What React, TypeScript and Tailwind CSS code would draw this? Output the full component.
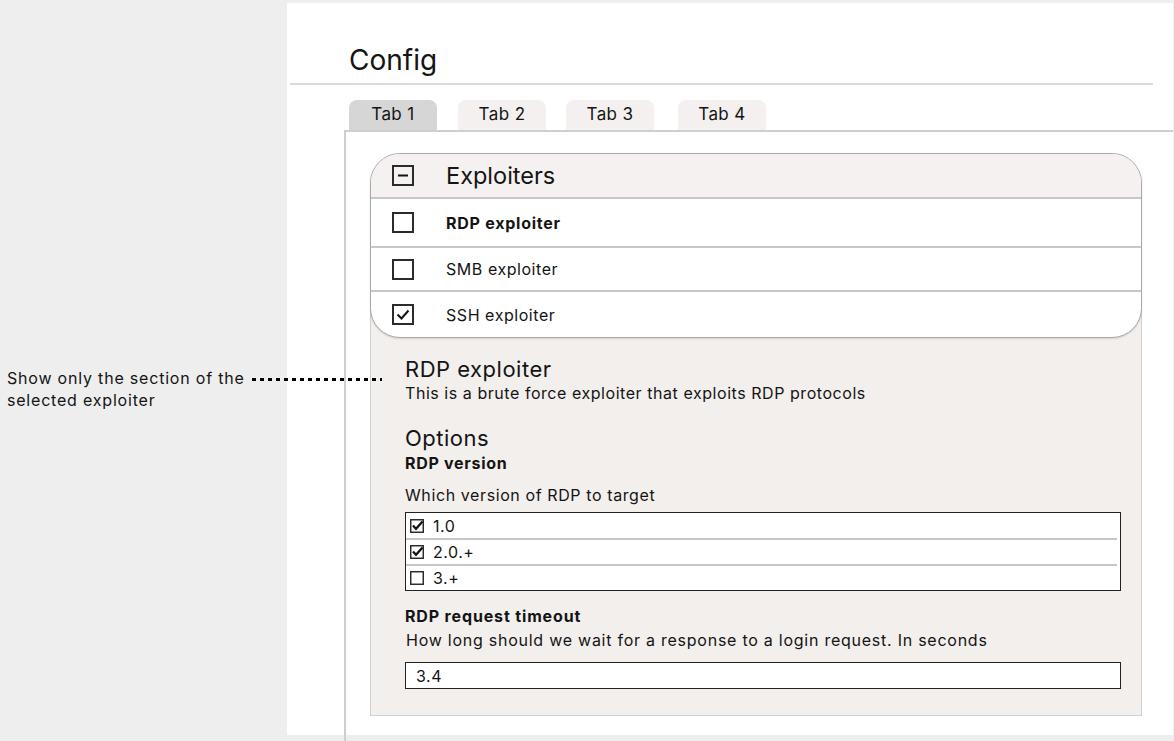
import React from 'react';

const tabs = [
  { label: 'Tab 1', active: true, gap: 'ml-0' },
  { label: 'Tab 2', active: false, gap: 'ml-[21px]' },
  { label: 'Tab 3', active: false, gap: 'ml-[20px]' },
  { label: 'Tab 4', active: false, gap: 'ml-[24px]' },
];

const exploiters = [
  { name: 'RDP exploiter', bold: true, checked: false, row: 'h-[49px]' },
  { name: 'SMB exploiter', bold: false, checked: false, row: 'h-[44px]' },
  { name: 'SSH exploiter', bold: false, checked: true, row: 'h-[47px]' },
];

const versions = [
  { label: '1.0', checked: true, row: 'h-[25px]' },
  { label: '2.0.+', checked: true, row: 'h-[24px]' },
  { label: '3.+', checked: false, row: 'h-[24px]' },
];

const BoxIcon: React.FC<{ mark?: 'minus' | 'check' }> = ({ mark }) => (
  <svg width="22" height="21" viewBox="0 0 22 21" fill="none" className="shrink-0">
    <rect x="1" y="1" width="20" height="19" stroke="#2b2b2b" strokeWidth="2" />
    {mark === 'minus' && <line x1="6" y1="10.5" x2="16" y2="10.5" stroke="#111" strokeWidth="2" />}
    {mark === 'check' && (
      <polyline points="5.5,10.5 9.5,14.5 16.5,6.5" stroke="#111" strokeWidth="2" fill="none" />
    )}
  </svg>
);

const SmallBox: React.FC<{ checked: boolean }> = ({ checked }) => (
  <svg width="14" height="14" viewBox="0 0 14 14" fill="none" className="shrink-0">
    <rect x="0.75" y="0.75" width="12.5" height="12.5" stroke="#222" strokeWidth="1.4" />
    {checked && <polyline points="3,6.5 6,9.8 12.5,2.5" stroke="#111" strokeWidth="2.2" fill="none" />}
  </svg>
);

export default function App() {
  return (
    <div className="flex h-[741px] w-full overflow-hidden bg-[#eeeeee] font-['Inter','Noto_Sans',sans-serif] text-[#141414]">
      {/* annotation column */}
      <aside className="relative z-20 w-[287px] shrink-0 pl-[7px] pt-[367px] text-[16px] leading-[22px] tracking-[0.8px]">
        <p className="whitespace-nowrap">
          Show only the section of the
          <span className="ml-[7px] inline-block h-[3px] w-[130px] align-middle bg-[repeating-linear-gradient(90deg,#000_0_4px,transparent_4px_8px)]" />
        </p>
        <p>selected exploiter</p>
      </aside>

      <main className="mb-[6px] mr-[1px] mt-[3px] flex flex-1 flex-col bg-white">
        <h1 className="pl-[62px] pt-[40px] text-[28px] leading-[34px] font-normal">Config</h1>
        <div className="ml-[3px] mr-[20px] mt-[6px] h-[2px] bg-[#dadada]" />

        <div className="mt-[15px] flex pl-[62px]">
          {tabs.map((t) => (
            <div
              key={t.label}
              className={`${t.gap} flex h-[30px] w-[88px] items-center justify-center rounded-t-[8px] text-[17px] tracking-[0.4px] ${
                t.active ? 'bg-[#d6d6d6]' : 'bg-[#f3f0ef]'
              }`}
            >
              {t.label}
            </div>
          ))}
        </div>

        <section className="-mb-[6px] ml-[57px] flex-1 border-l-2 border-t-2 border-[#cfcfcf] pl-[24px] pt-[21px]">
          <div className="w-[772px]">
            {/* accordion */}
            <div className="relative z-10 overflow-hidden rounded-[30px] border border-[#a9a9a9] bg-white shadow-[0_1px_2px_rgba(0,0,0,0.12)]">
              <div className="flex h-[43px] items-center bg-[#f4f1f0] pl-[21px]">
                <BoxIcon mark="minus" />
                <span className="ml-[32px] text-[23.5px] leading-[28px]">Exploiters</span>
              </div>
              {exploiters.map((e) => (
                <div key={e.name} className={`${e.row} flex items-center border-t-2 border-[#c8c8c8] pl-[21px]`}>
                  <BoxIcon mark={e.checked ? 'check' : undefined} />
                  <span
                    className={`ml-[32px] text-[16px] ${e.bold ? 'font-bold tracking-[0.75px]' : 'tracking-[0.55px]'}`}
                  >
                    {e.name}
                  </span>
                </div>
              ))}
            </div>

            {/* selected exploiter details */}
            <div className="-mt-[30px] border border-t-0 border-[#cfcfcf] bg-[#f2efed] pb-[26px] pl-[34px] pr-[20px] pt-[47px]">
              <h2 className="text-[22px] leading-[28px] tracking-[0.5px]">RDP exploiter</h2>
              <p className="text-[16px] leading-[20px] tracking-[0.55px]">
                This is a brute force exploiter that exploits RDP protocols
              </p>
              <h3 className="mt-[21px] text-[22px] leading-[28px] tracking-[0.5px]">Options</h3>
              <p className="mt-[1px] text-[16px] font-bold leading-[20px] tracking-[0.7px]">RDP version</p>
              <p className="mt-[12px] text-[16px] leading-[20px] tracking-[0.6px]">Which version of RDP to target</p>

              <div className="mt-[7px] border-[1.5px] border-[#222] bg-white">
                {versions.map((v, i) => (
                  <React.Fragment key={v.label}>
                    {i > 0 && <div className="mr-[3px] h-[2px] bg-[#c8c8c8]" />}
                    <div className={`${v.row} flex items-center pl-[4px] text-[16px] tracking-[0.5px]`}>
                      <SmallBox checked={v.checked} />
                      <span className="ml-[9px]">{v.label}</span>
                    </div>
                  </React.Fragment>
                ))}
              </div>

              <p className="mt-[15px] text-[16px] font-bold leading-[20px] tracking-[0.85px]">RDP request timeout</p>
              <p className="mt-[4px] pl-[1px] text-[16px] leading-[20px] tracking-[0.75px]">
                How long should we wait for a response to a login request. In seconds
              </p>
              <div className="mt-[12px] flex h-[27px] items-center border-[1.5px] border-[#222] bg-white pl-[10px] text-[16px] tracking-[0.6px]">
                3.4
              </div>
            </div>
          </div>
        </section>
      </main>
    </div>
  );
}
